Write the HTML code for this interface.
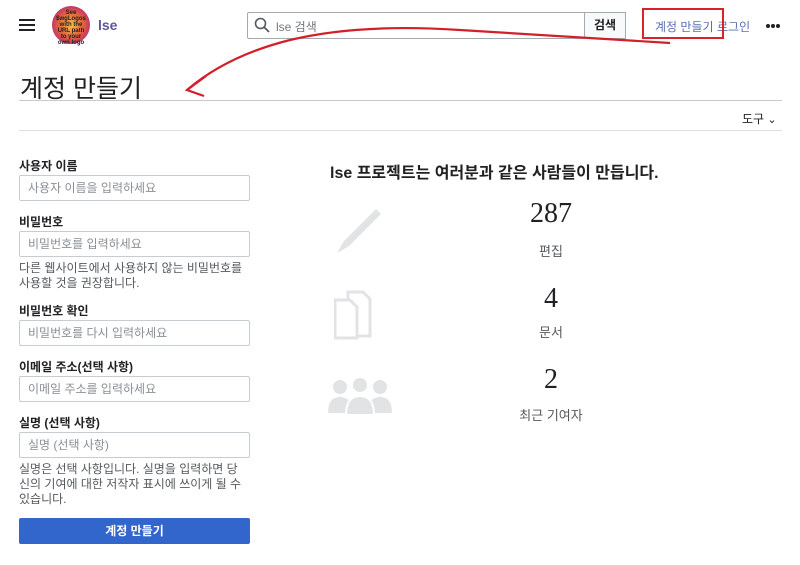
<!DOCTYPE html>
<html><head><meta charset="utf-8"><style>
*{box-sizing:border-box;margin:0;padding:0}
body{width:800px;height:565px;background:#fff;font-family:"Liberation Sans","Noto Sans CJK KR",sans-serif;color:#202122;position:relative;overflow:hidden}
.a{position:absolute;white-space:nowrap}
.lbl{font-size:12px;font-weight:bold;left:19px}
.inp{left:19px;width:231px;height:26px;border:1px solid #c8ccd1;border-radius:2px;font-size:12px;color:#8a8f95;padding:5px 8px;line-height:14px}
.help{left:19px;font-size:12px;color:#54595d;line-height:15px}
.num{font-family:"Liberation Serif",serif;font-size:28px;width:140px;text-align:center;left:481px}
.cap{font-size:13px;color:#54595d;width:140px;text-align:center;left:481px}
</style></head><body>
<div class="a" style="left:19px;top:19px;width:16px;height:2px;background:#202122;box-shadow:0 5px 0 #202122,0 10px 0 #202122"></div>
<div class="a" style="left:52px;top:6px;width:38px;height:38px;border-radius:50%;background:radial-gradient(circle,#f6c14a 0,#e9603a 45%,#b9336e 75%,#7a2a8a 100%)"></div>
<div class="a" style="left:56px;top:10px;font-size:6px;line-height:6px;text-align:center;width:30px;font-weight:bold;white-space:normal">See $wgLogos with the URL path to your own logo</div>
<div class="a" style="left:98px;top:17px;font-size:14px;font-weight:bold;color:#5a56a0">lse</div>
<div class="a" style="left:247px;top:12px;width:379px;height:27px;border:1px solid #a2a9b1;border-radius:2px"></div>
<div class="a" style="left:584px;top:12px;width:42px;height:27px;border:1px solid #a2a9b1;background:#f8f9fa;font-size:12px;font-weight:bold;text-align:center;line-height:25px">검색</div>
<svg class="a" style="left:254px;top:17px" width="16" height="16"><circle cx="6.5" cy="6.5" r="5" fill="none" stroke="#54595d" stroke-width="1.6"/><line x1="10" y1="10" x2="15" y2="15" stroke="#54595d" stroke-width="1.8"/></svg>
<div class="a" style="left:276px;top:18px;font-size:12px;color:#72777d">lse 검색</div>
<div class="a" style="left:655px;top:18px;font-size:12px;color:#5a6fae">계정 만들기</div>
<div class="a" style="left:717px;top:18px;font-size:12px;color:#5a6fae">로그인</div>
<div class="a" style="left:642px;top:8px;width:82px;height:31px;border:2px solid #d9222a"></div>
<div class="a" style="left:766px;top:24px;width:4px;height:4px;border-radius:50%;background:#202122;box-shadow:5px 0 0 #202122,10px 0 0 #202122"></div>
<div class="a" style="left:20px;top:69px;font-size:25px">계정 만들기</div>
<div class="a" style="left:19px;top:100px;width:763px;height:1px;background:#c8ccd1"></div>
<div class="a" style="left:742px;top:110px;font-size:12px">도구 <span style="font-size:11px">⌄</span></div>
<div class="a" style="left:19px;top:130px;width:763px;height:1px;background:#dcdfe2"></div>
<svg class="a" style="left:0;top:0" width="800" height="120"><path d="M670 43 L460 30 C400 26 340 28 290 40 C250 50 215 66 187 90" fill="none" stroke="#d1202a" stroke-width="2.2"/><path d="M206 76 L187 90 L204 96" fill="none" stroke="#d1202a" stroke-width="2.2"/></svg>
<div class="a lbl" style="top:157px">사용자 이름</div>
<div class="a inp" style="top:175px">사용자 이름을 입력하세요</div>
<div class="a lbl" style="top:213px">비밀번호</div>
<div class="a inp" style="top:231px">비밀번호를 입력하세요</div>
<div class="a help" style="top:261px">다른 웹사이트에서 사용하지 않는 비밀번호를<br>사용할 것을 권장합니다.</div>
<div class="a lbl" style="top:302px">비밀번호 확인</div>
<div class="a inp" style="top:320px">비밀번호를 다시 입력하세요</div>
<div class="a lbl" style="top:358px">이메일 주소(선택 사항)</div>
<div class="a inp" style="top:376px">이메일 주소를 입력하세요</div>
<div class="a lbl" style="top:414px">실명 (선택 사항)</div>
<div class="a inp" style="top:432px">실명 (선택 사항)</div>
<div class="a help" style="top:462px">실명은 선택 사항입니다. 실명을 입력하면 당<br>신의 기여에 대한 저작자 표시에 쓰이게 될 수<br>있습니다.</div>
<div class="a" style="left:19px;top:518px;width:231px;height:26px;background:#3366cc;border-radius:2px;color:#fff;font-size:12px;font-weight:bold;text-align:center;line-height:26px">계정 만들기</div>
<div class="a" style="left:330px;top:159px;font-size:16px;font-weight:bold">lse 프로젝트는 여러분과 같은 사람들이 만듭니다.</div>
<svg class="a" style="left:334px;top:203px" width="52" height="52"><path d="M10 38 L42 6 L47 11 L15 43 Z" fill="#e2e3e4"/><path d="M10 38 L3 50 L15 43 Z" fill="#e2e3e4"/></svg>
<div class="a num" style="top:198px">287</div>
<div class="a cap" style="top:241px">편집</div>
<svg class="a" style="left:334px;top:288px" width="54" height="52"><path d="M14 4 H29 L36 11 V48 H14 Z" fill="none" stroke="#e2e3e4" stroke-width="3"/><path d="M1 12 H16 L23 19 V50 H1 Z" fill="#fff" stroke="#e2e3e4" stroke-width="3"/></svg>
<div class="a num" style="top:283px">4</div>
<div class="a cap" style="top:322px">문서</div>
<svg class="a" style="left:328px;top:375px" width="66" height="40"><g fill="#e2e3e4"><circle cx="12" cy="12" r="7"/><path d="M0 38 Q0 22 12 22 Q24 22 24 38Z"/><circle cx="52" cy="12" r="7"/><path d="M40 38 Q40 22 52 22 Q64 22 64 38Z"/><circle cx="32" cy="10" r="8" stroke="#fff" stroke-width="2"/><path d="M18 40 Q18 21 32 21 Q46 21 46 40Z" stroke="#fff" stroke-width="2"/></g></svg>
<div class="a num" style="top:364px">2</div>
<div class="a cap" style="top:405px">최근 기여자</div>
</body></html>
